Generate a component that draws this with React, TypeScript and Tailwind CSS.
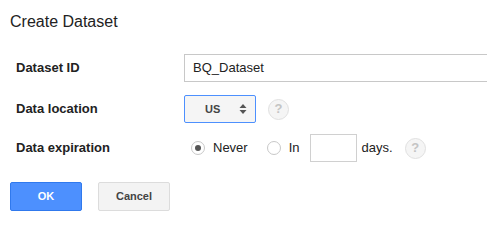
const font = { fontFamily: '"Liberation Sans", Arial, sans-serif' };

function Help() {
	return (
		<span className="flex size-[21px] items-center justify-center rounded-full border border-[#e0e0e0] bg-[#f5f5f5] text-[13px] font-bold text-[#c4c4c4]">
			?
		</span>
	);
}

function Radio({ checked }: { checked?: boolean }) {
	return (
		<span className="flex size-[14px] items-center justify-center rounded-full border border-[#c8c8c8] bg-white">
			{checked && <span className="size-[6px] rounded-full bg-[#555]" />}
		</span>
	);
}

export default function App() {
	return (
		<div
			className="h-[229px] w-[487px] overflow-hidden bg-white text-[#222]"
			style={font}
		>
			<h1 className="pl-[10px] pt-[12px] text-[16px] leading-[20px] text-[#222]">
				Create Dataset
			</h1>

			<div className="mt-[22px] flex items-center">
				<div className="w-[184px] shrink-0 pl-[16px] text-[13px] font-bold">
					Dataset ID
				</div>
				<div className="flex h-[28px] w-[320px] shrink-0 items-center border border-[#c8c8c8] pl-[8px] text-[13px]">
					BQ_Dataset
				</div>
			</div>

			<div className="mt-[13px] flex items-center">
				<div className="w-[184px] shrink-0 pl-[16px] text-[13px] font-bold">
					Data location
				</div>
				<div className="flex h-[28px] w-[72px] items-center justify-between rounded-[2px] border border-[#4d90fe] bg-[#f5f5f5] pl-[20px] pr-[8px] text-[11px] font-bold text-[#444]">
					US
					<svg width="8" height="12" viewBox="0 0 8 12" fill="#555">
						<path d="M4 1 L7.5 5 H0.5 Z" />
						<path d="M4 11 L7.5 7 H0.5 Z" />
					</svg>
				</div>
				<span className="ml-[12px]">
					<Help />
				</span>
			</div>

			<div className="mt-[11px] flex items-center">
				<div className="w-[191px] shrink-0 pl-[16px] text-[13px] font-bold">
					Data expiration
				</div>
				<Radio checked />
				<span className="ml-[8px] text-[13px]">Never</span>
				<span className="ml-[19px]">
					<Radio />
				</span>
				<span className="ml-[8px] text-[13px]">In</span>
				<span className="ml-[10px] h-[28px] w-[47px] border border-[#d0d0d0]" />
				<span className="ml-[5px] text-[13px]">days.</span>
				<span className="ml-[12px]">
					<Help />
				</span>
			</div>

			<div className="mt-[20px] flex gap-[16px] pl-[10px]">
				<button className="h-[29px] w-[72px] rounded-[2px] border border-[#3079ed] bg-[#4d90fe] text-[11px] font-bold text-white">
					OK
				</button>
				<button className="h-[29px] w-[72px] rounded-[2px] border border-[#dcdcdc] bg-[#f3f3f3] text-[11px] font-bold text-[#444]">
					Cancel
				</button>
			</div>
		</div>
	);
}
